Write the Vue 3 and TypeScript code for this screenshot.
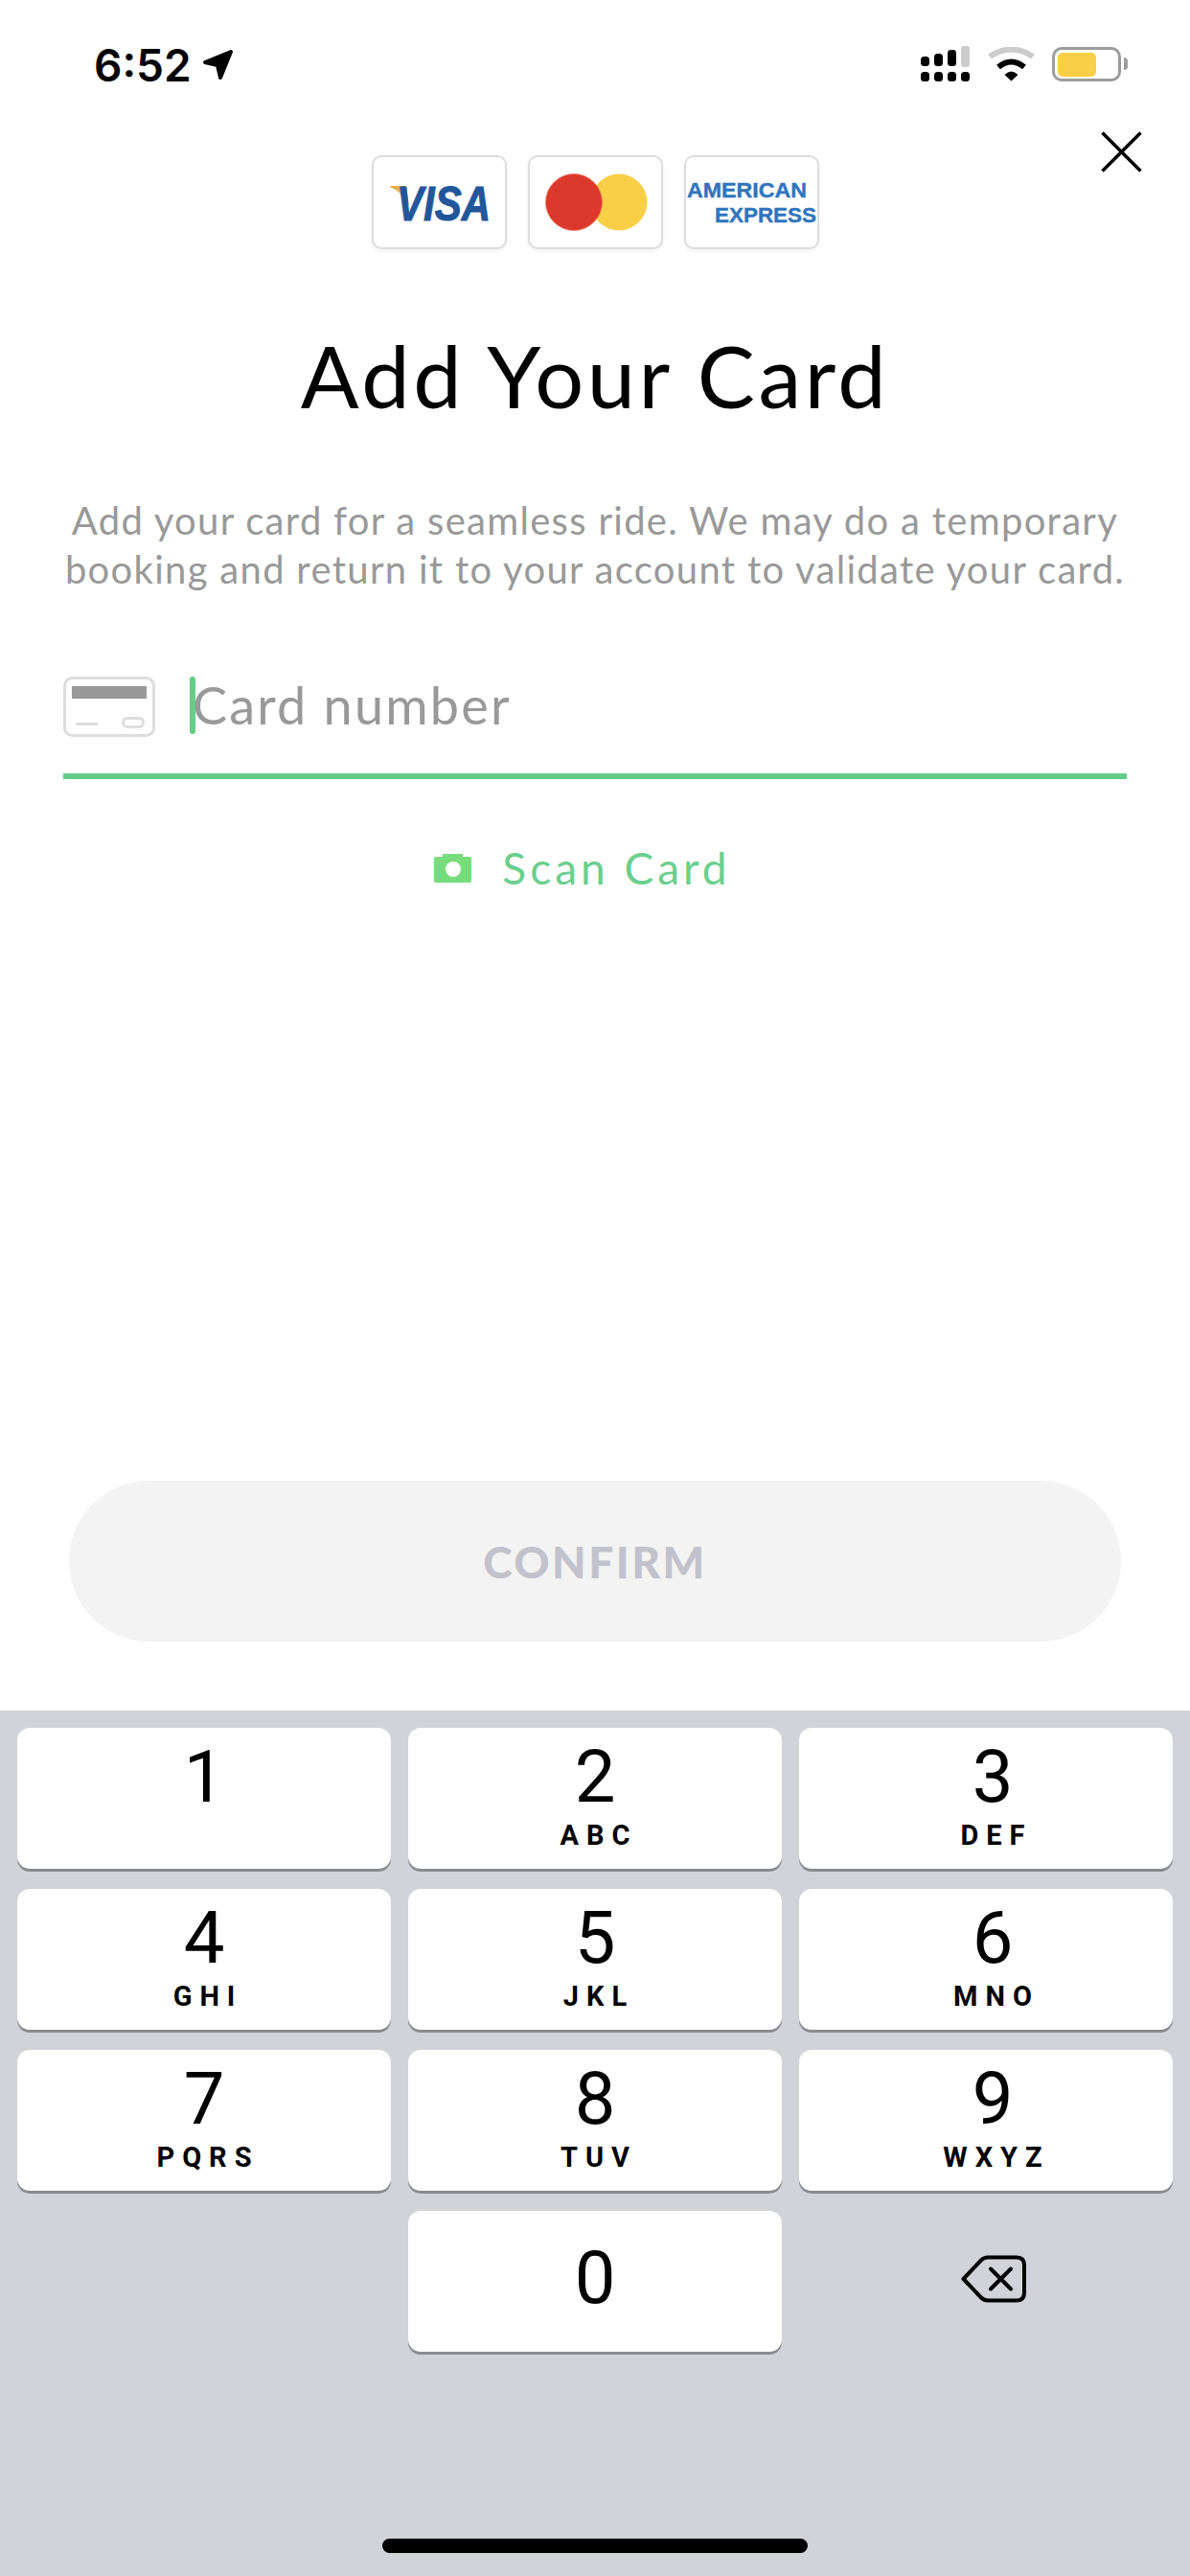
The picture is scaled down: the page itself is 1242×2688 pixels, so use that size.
<script setup lang="ts">
interface Key {
  digit: string;
  letters: string;
}

const keys: Key[] = [
  { digit: '1', letters: '' },
  { digit: '2', letters: 'ABC' },
  { digit: '3', letters: 'DEF' },
  { digit: '4', letters: 'GHI' },
  { digit: '5', letters: 'JKL' },
  { digit: '6', letters: 'MNO' },
  { digit: '7', letters: 'PQRS' },
  { digit: '8', letters: 'TUV' },
  { digit: '9', letters: 'WXYZ' }
];
</script>

<template>
  <div class="screen">
    <header class="status">
      <div class="status__left">
        <span class="status__time">6:52</span>
        <svg class="status__arrow" width="34" height="34" viewBox="0 0 34 34">
          <path d="M30 3 L3 14 L16 17 L19 30 Z" fill="#000" stroke="#000" stroke-width="4" stroke-linejoin="round" />
        </svg>
      </div>
      <div class="status__right">
        <svg width="52" height="38" viewBox="0 0 52 38">
          <rect x="42" y="0" width="9" height="22" rx="3" fill="#ccc" />
          <rect x="0" y="11" width="9" height="10" rx="3.5" />
          <rect x="14" y="8" width="9" height="13" rx="3.5" />
          <rect x="28" y="4" width="9" height="17" rx="3.5" />
          <rect x="0" y="27" width="9" height="10" rx="3.5" />
          <rect x="14" y="27" width="9" height="10" rx="3.5" />
          <rect x="28" y="27" width="9" height="10" rx="3.5" />
          <rect x="42" y="27" width="9" height="10" rx="3.5" />
        </svg>
        <svg class="status__wifi" width="49" height="36" viewBox="0 0 49 36">
          <path d="M2 10 Q24.5 -5 47 10" fill="none" stroke="#ccc" stroke-width="6" />
          <path d="M11 21 Q24.5 10 38 21" fill="none" stroke="#000" stroke-width="6" />
          <path d="M17.5 29 Q24.5 22 31.5 29 L24.5 35.5 Z" fill="#000" />
        </svg>
        <div class="battery">
          <div class="battery__level"></div>
          <div class="battery__nub"></div>
        </div>
      </div>
    </header>

    <svg class="close" width="43" height="43" viewBox="0 0 43 43">
      <path d="M1.5 1.5 L41.5 41.5 M41.5 1.5 L1.5 41.5" stroke="#000" stroke-width="3.5" />
    </svg>

    <main class="content">
      <div class="brands">
        <div class="brand">
          <svg width="137" height="94" viewBox="0 0 137 94">
            <path d="M17 30 L34 30 L37 51 Q31 37 17 31 Z" fill="#f0ad4a" />
            <text transform="translate(24 66) scale(0.84 1)" class="brand__visa">VISA</text>
          </svg>
        </div>
        <div class="brand">
          <svg width="137" height="94" viewBox="0 0 137 94">
            <circle cx="93" cy="47" r="29.5" fill="#f8cf47" />
            <circle cx="46" cy="47" r="29.5" fill="#dc382c" stroke="#ec7a5f" stroke-width="0.8" />
          </svg>
        </div>
        <div class="brand">
          <svg width="137" height="94" viewBox="0 0 137 94">
            <text x="1" y="42" class="brand__amex" textLength="125" lengthAdjust="spacingAndGlyphs">AMERICAN</text>
            <text x="30" y="68" class="brand__amex" textLength="106" lengthAdjust="spacingAndGlyphs">EXPRESS</text>
          </svg>
        </div>
      </div>

      <h1 class="title">Add Your Card</h1>
      <p class="intro">
        Add your card for a seamless ride. We may do a temporary<br />
        booking and return it to your account to validate your card.
      </p>

      <div class="field">
        <svg width="96" height="63" viewBox="0 0 96 63">
          <rect x="1.5" y="1.5" width="93" height="60" rx="8" fill="#fff" stroke="#ddd" stroke-width="3" />
          <rect x="9" y="10" width="78" height="13" fill="#999" />
          <rect x="13" y="48" width="23" height="3" fill="#ddd" />
          <rect x="62.5" y="43.5" width="21" height="9" rx="4.5" fill="none" stroke="#ddd" stroke-width="3" />
        </svg>
        <span class="field__caret"></span>
        <span class="field__placeholder">Card number</span>
      </div>

      <div class="scan">
        <svg width="39" height="30" viewBox="0 0 39 30">
          <path d="M9 0 H30 V3 H37 Q39 3 39 5 V28 Q39 30 37 30 H2 Q0 30 0 28 V5 Q0 3 2 3 H9 Z" fill="#77dd7c" />
          <circle cx="20" cy="16" r="8" fill="#fff" />
        </svg>
        <span class="scan__label">Scan Card</span>
      </div>

      <div class="spacer"></div>

      <button class="confirm" type="button">CONFIRM</button>
    </main>

    <section class="keyboard">
      <div class="keys">
        <div v-for="key in keys" :key="key.digit" class="key">
          <span class="key__digit">{{ key.digit }}</span>
          <span class="key__letters">{{ key.letters }}</span>
        </div>
        <div></div>
        <div class="key key--solo">
          <span class="key__digit">0</span>
        </div>
        <div class="backspace">
          <svg width="68" height="50" viewBox="0 0 68 50">
            <path
              d="M2.5 25 L21 5.5 Q24 2.5 28 2.5 H58 Q66 2.5 66 10.5 V39.5 Q66 47.5 58 47.5 H28 Q24 47.5 21 44.5 Z"
              fill="none"
              stroke="#000"
              stroke-width="4"
              stroke-linejoin="round"
            />
            <path d="M31 14.5 L52 35.5 M52 14.5 L31 35.5" stroke="#000" stroke-width="4" stroke-linecap="round" />
          </svg>
        </div>
      </div>
      <div class="home"></div>
    </section>
  </div>
</template>

<style>
html,
body {
  margin: 0;
  background: #fff;
}
</style>

<style scoped>
.screen {
  position: relative;
  width: 1242px;
  height: 2688px;
  display: flex;
  flex-direction: column;
  overflow: hidden;
  background: #fff;
  font-family: Lato, 'Open Sans', sans-serif;
}

.status {
  height: 162px;
  box-sizing: border-box;
  padding: 48px 72px 0 98px;
  display: flex;
  justify-content: space-between;
  align-items: flex-start;
}

.status__left {
  display: flex;
  align-items: center;
  height: 40px;
  gap: 11px;
}

.status__time {
  font-family: Inter, 'Liberation Sans', sans-serif;
  font-size: 46px;
  font-weight: 600;
  line-height: 40px;
  color: #000;
}

.status__right {
  display: flex;
  align-items: flex-start;
  gap: 18px;
}

.status__wifi {
  margin-top: 1px;
}

.battery {
  position: relative;
  width: 72px;
  height: 36px;
  margin-top: 1px;
  box-sizing: border-box;
  border: 3.5px solid #9c9c9c;
  border-radius: 10px;
  padding: 2.5px;
}

.battery__level {
  width: 40px;
  height: 25px;
  border-radius: 5px;
  background: #f8cf47;
}

.battery__nub {
  position: absolute;
  right: -10px;
  top: 8px;
  width: 4px;
  height: 13px;
  border-radius: 0 6px 6px 0;
  background: #9c9c9c;
}

.close {
  position: absolute;
  left: 1149px;
  top: 137px;
}

.content {
  flex: 1;
  display: flex;
  flex-direction: column;
  align-items: center;
}

.brands {
  display: flex;
  gap: 22px;
}

.brand {
  width: 141px;
  height: 98px;
  box-sizing: border-box;
  border: 2px solid #ddd;
  border-radius: 10px;
  background: #fff;
  box-shadow: 0 2px 5px rgba(0, 0, 0, 0.06);
}

.brand svg {
  display: block;
}

.brand__visa {
  font-family: 'Liberation Sans', sans-serif;
  font-size: 50px;
  font-weight: 700;
  font-style: italic;
  fill: #21569a;
  stroke: #21569a;
  stroke-width: 1px;
}

.brand__amex {
  font-family: 'Liberation Sans', sans-serif;
  font-size: 22px;
  font-weight: 700;
  fill: #2f75bd;
  stroke: #2f75bd;
  stroke-width: 0.4px;
}

.title {
  margin: 81px 0 0;
  font-size: 90px;
  font-weight: 400;
  line-height: 100px;
  letter-spacing: 3.6px;
  color: #000;
}

.intro {
  margin: 77px 0 0;
  font-size: 40px;
  font-weight: 400;
  line-height: 51px;
  letter-spacing: 1.3px;
  color: #999;
  text-align: center;
}

.field {
  align-self: stretch;
  margin: 86px 66px 0;
  height: 107px;
  box-sizing: border-box;
  border-bottom: 6px solid #66cc8a;
  display: flex;
  align-items: flex-start;
}

.field__caret {
  width: 6px;
  height: 60px;
  margin-left: 36px;
  border-radius: 3px;
  background: #66cc8a;
}

.field__placeholder {
  margin-left: -3px;
  font-size: 54px;
  line-height: 60px;
  letter-spacing: 2.2px;
  color: #999;
}

.scan {
  margin: 65px 26px 0 0;
  display: flex;
  align-items: center;
  gap: 32px;
}

.scan__label {
  font-size: 46px;
  line-height: 56px;
  letter-spacing: 4px;
  color: #6bcf8e;
}

.spacer {
  flex: 1;
}

.confirm {
  width: 1098px;
  height: 168px;
  margin-bottom: 72px;
  border: 0;
  border-radius: 84px;
  background: #f3f3f3;
  font-family: inherit;
  font-size: 46px;
  font-weight: 900;
  letter-spacing: 2.5px;
  color: #c2c2cc;
}

.keyboard {
  height: 903px;
  box-sizing: border-box;
  background: #d1d3d9;
  padding-top: 18px;
  display: flex;
  flex-direction: column;
  align-items: center;
}

.keys {
  display: grid;
  grid-template-columns: repeat(3, 390px);
  grid-auto-rows: 147px;
  gap: 21px 18px;
}

.key {
  display: flex;
  flex-direction: column;
  align-items: center;
  box-sizing: border-box;
  border-radius: 13px;
  background: #fff;
  box-shadow: 0 3px 0 #8a8b90;
  font-family: Roboto, 'Liberation Sans', sans-serif;
  color: #000;
}

.key:nth-child(3n) {
  padding-left: 14px;
}

.key--solo {
  justify-content: center;
  padding-bottom: 19px;
}

.key__digit {
  font-size: 76px;
  line-height: 80px;
  margin-top: 11px;
}

.key__letters {
  margin-top: 4px;
  font-size: 29px;
  font-weight: 700;
  line-height: 34px;
  letter-spacing: 8px;
  margin-right: -8px;
}

.backspace {
  display: flex;
  align-items: center;
  justify-content: center;
  padding: 0 0 6px 16px;
}

.home {
  width: 444px;
  height: 15px;
  margin-top: 195px;
  border-radius: 8px;
  background: #000;
}
</style>
